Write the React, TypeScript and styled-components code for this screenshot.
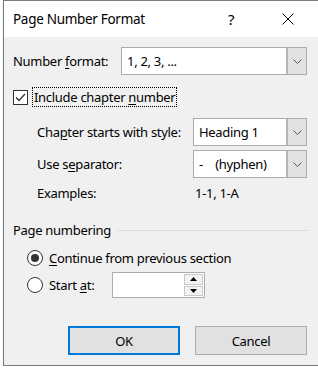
import styled, { createGlobalStyle } from 'styled-components';

const GlobalStyle = createGlobalStyle`
  html, body {
    margin: 0;
    padding: 0;
    background: #ffffff;
    overflow: hidden;
  }
  body {
    font-family: "Noto Sans", "Liberation Sans", sans-serif;
    font-size: 13px;
    letter-spacing: -0.3px;
    color: #000000;
  }
`;

const Dialog = styled.div`
  margin-left: 3px;
  width: 315px;
  height: 366px;
  box-sizing: border-box;
  border: 1px solid #7a7a7a;
  border-right: none;
  background: #f0f0f0;
  display: flex;
  flex-direction: column;
  box-shadow: 0 1px 2px rgba(0, 0, 0, 0.12);
`;

const TitleBar = styled.div`
  height: 36px;
  background: #ffffff;
  display: flex;
  align-items: center;
  padding-left: 9px;
  padding-right: 10px;
`;

const Title = styled.div`
  flex: 1;
  font-size: 13.5px;
`;

const CaptionButton = styled.div<{ gap?: number }>`
  width: 40px;
  height: 36px;
  display: flex;
  align-items: center;
  justify-content: center;
  margin-left: ${(p) => p.gap ?? 0}px;
  font-size: 15px;
`;

const Body = styled.div`
  flex: 1;
  display: flex;
  flex-direction: column;
  padding: 0 11px 0 9px;
`;

const Row = styled.div<{ top: number; height: number; indent?: number }>`
  display: flex;
  align-items: center;
  margin-top: ${(p) => p.top}px;
  height: ${(p) => p.height}px;
  padding-left: ${(p) => p.indent ?? 0}px;
`;

const Label = styled.div<{ width: number }>`
  width: ${(p) => p.width}px;
  flex-shrink: 0;
  white-space: nowrap;
`;

const Key = styled.span`
  text-decoration: underline;
  text-underline-offset: 2px;
`;

const Combo = styled.div<{ width: number }>`
  width: ${(p) => p.width}px;
  height: 28px;
  box-sizing: border-box;
  border: 1px solid #acacac;
  background: #ffffff;
  display: flex;
`;

const ComboText = styled.div`
  flex: 1;
  display: flex;
  align-items: center;
  padding-left: 5px;
  white-space: pre;
`;

const ComboButton = styled.div`
  width: 20px;
  box-sizing: border-box;
  border-left: 2px solid #b4b4b4;
  background: #e1e1e1;
  display: flex;
  align-items: center;
  justify-content: center;
`;

const CheckBox = styled.div`
  width: 15px;
  height: 15px;
  box-sizing: border-box;
  border: 1px solid #333333;
  background: #ffffff;
  display: flex;
  align-items: center;
  justify-content: center;
  flex-shrink: 0;
`;

const FocusLabel = styled.div`
  margin-left: 4px;
  height: 20px;
  padding: 0 1px;
  box-sizing: border-box;
  border: 1px dotted #000000;
  display: flex;
  align-items: center;
  white-space: nowrap;
`;

const Value = styled.div`
  padding-left: 2px;
`;

const GroupHeader = styled.div`
  display: flex;
  align-items: center;
  margin-top: 18px;
  height: 20px;
`;

const GroupLine = styled.div`
  flex: 1;
  height: 1px;
  background: #dcdcdc;
  margin-left: 6px;
  margin-right: -2px;
`;

const Radio = styled.div<{ checked?: boolean }>`
  width: 16px;
  height: 16px;
  box-sizing: border-box;
  border: 1px solid #333333;
  border-radius: 50%;
  background: #ffffff;
  display: flex;
  align-items: center;
  justify-content: center;
  flex-shrink: 0;
  margin-right: 6px;

  &::after {
    content: '';
    display: ${(p) => (p.checked ? 'block' : 'none')};
    width: 8px;
    height: 8px;
    border-radius: 50%;
    background: #333333;
  }
`;

const Spin = styled.div`
  width: 93px;
  height: 26px;
  box-sizing: border-box;
  border: 1px solid #acacac;
  background: #ffffff;
  display: flex;
  justify-content: flex-end;
  padding: 1px;
`;

const SpinButtons = styled.div`
  width: 19px;
  display: flex;
  flex-direction: column;
  gap: 1px;
`;

const SpinButton = styled.div`
  flex: 1;
  box-sizing: border-box;
  border: 1px solid #c8c8c8;
  background: #f3f3f3;
  display: flex;
  align-items: center;
  justify-content: center;
`;

const Footer = styled.div`
  display: flex;
  justify-content: flex-end;
  gap: 15px;
  margin-top: 28px;
`;

const Button = styled.div<{ primary?: boolean }>`
  width: 112px;
  height: 29px;
  box-sizing: border-box;
  background: #e1e1e1;
  border: ${(p) => (p.primary ? '2px solid #0078d7' : '1px solid #adadad')};
  display: flex;
  align-items: center;
  justify-content: center;
`;

const Chevron = () => (
  <svg width="9" height="5" viewBox="0 0 9 5">
    <polyline points="0.5,0.5 4.5,4.5 8.5,0.5" fill="none" stroke="#5a5a5a" strokeWidth="1" />
  </svg>
);

const Arrow = ({ up }: { up?: boolean }) => (
  <svg width="7" height="4" viewBox="0 0 7 4">
    <polygon points={up ? '0,4 7,4 3.5,0' : '0,0 7,0 3.5,4'} fill="#000000" />
  </svg>
);

const App = () => {
  return (
    <>
      <GlobalStyle />
      <Dialog>
        <TitleBar>
          <Title>Page Number Format</Title>
          <CaptionButton>?</CaptionButton>
          <CaptionButton gap={17}>
            <svg width="12" height="12" viewBox="0 0 12 12">
              <path d="M0.5 0.5 L11.5 11.5 M11.5 0.5 L0.5 11.5" stroke="#000000" strokeWidth="1" />
            </svg>
          </CaptionButton>
        </TitleBar>
        <Body>
          <Row top={10} height={28}>
            <Label width={108}>
              Number <Key>f</Key>ormat:
            </Label>
            <Combo width={186}>
              <ComboText>1, 2, 3, ...</ComboText>
              <ComboButton>
                <Chevron />
              </ComboButton>
            </Combo>
          </Row>
          <Row top={12} height={20}>
            <CheckBox>
              <svg width="11" height="9" viewBox="0 0 11 9">
                <polyline points="1,4.5 4,7.5 10,1" fill="none" stroke="#333333" strokeWidth="1.3" />
              </svg>
            </CheckBox>
            <FocusLabel>
              Include chapter&nbsp;<Key>n</Key>umber
            </FocusLabel>
          </Row>
          <Row top={11} height={28} indent={24}>
            <Label width={156}>
              Cha<Key>p</Key>ter starts with style:
            </Label>
            <Combo width={114}>
              <ComboText>Heading 1</ComboText>
              <ComboButton>
                <Chevron />
              </ComboButton>
            </Combo>
          </Row>
          <Row top={4} height={28} indent={24}>
            <Label width={156}>
              Use s<Key>e</Key>parator:
            </Label>
            <Combo width={114}>
              <ComboText>{'-    (hyphen)'}</ComboText>
              <ComboButton>
                <Chevron />
              </ComboButton>
            </Combo>
          </Row>
          <Row top={6} height={18} indent={24}>
            <Label width={156}>Examples:</Label>
            <Value>1-1, 1-A</Value>
          </Row>
          <GroupHeader>
            Page numbering
            <GroupLine />
          </GroupHeader>
          <Row top={8} height={20} indent={14}>
            <Radio checked />
            <span>
              <Key>C</Key>ontinue from previous section
            </span>
          </Row>
          <Row top={4} height={26} indent={14}>
            <Radio />
            <Label width={63}>
              Start <Key>a</Key>t:
            </Label>
            <Spin>
              <SpinButtons>
                <SpinButton>
                  <Arrow up />
                </SpinButton>
                <SpinButton>
                  <Arrow />
                </SpinButton>
              </SpinButtons>
            </Spin>
          </Row>
          <Footer>
            <Button primary>OK</Button>
            <Button>Cancel</Button>
          </Footer>
        </Body>
      </Dialog>
    </>
  );
};

export default App;
